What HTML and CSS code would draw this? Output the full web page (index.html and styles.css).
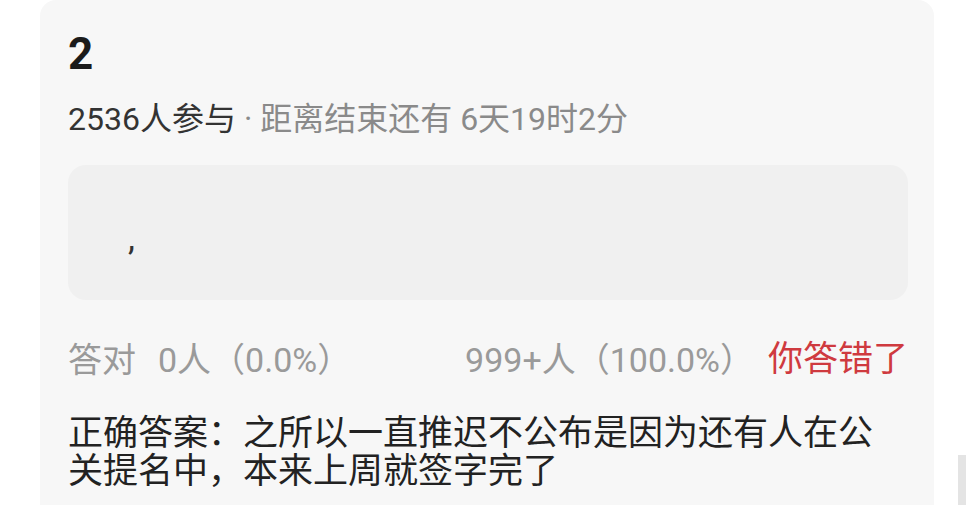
FILE: index.html
```html
<!DOCTYPE html>
<html lang="zh-CN">
<head>
<meta charset="utf-8">
<title>竞猜</title>
<link rel="stylesheet" href="styles.css">
</head>
<body>
<div class="page">
  <section class="quiz-card">
    <h2 class="quiz-title">2</h2>
    <p class="quiz-meta"><span class="meta-count">2536人参与</span><span class="meta-time"> · 距离结束还有 6天19时2分</span></p>
    <div class="option-box"><span class="option-text">,</span></div>
    <div class="stats-row">
      <div class="stat-left"><span class="stat-label">答对</span><span>0人（0.0%）</span></div>
      <div class="stat-right"><span>999+人（100.0%）</span><span class="result-wrong">你答错了</span></div>
    </div>
    <p class="answer">正确答案：之所以一直推迟不公布是因为还有人在公关提名中，本来上周就签字完了</p>
  </section>
  <div class="scroll-thumb"></div>
</div>
</body>
</html>
```

FILE: styles.css
```css
html, body {
  margin: 0;
  padding: 0;
  background: #ffffff;
}

body {
  font-family: Roboto, "Noto Sans CJK SC", sans-serif;
  width: 974px;
  height: 505px;
  overflow: hidden;
}

.page {
  position: relative;
  height: 505px;
  padding-left: 40px;
}

.quiz-card {
  width: 894px;
  height: 505px;
  box-sizing: border-box;
  background: #f7f7f7;
  border-radius: 16px 16px 0 0;
  padding: 28px 26px 0 28px;
}

.quiz-title {
  margin: 0;
  font-size: 44px;
  line-height: 52px;
  font-weight: 700;
  color: #1b1b1b;
}

.quiz-meta {
  margin: 19px 0 0;
  font-size: 32px;
  line-height: 40px;
  white-space: nowrap;
}

.meta-count {
  color: #333333;
}

.meta-time {
  color: #8a8a8a;
}

.option-box {
  margin-top: 26px;
  height: 135px;
  box-sizing: border-box;
  background: #f0f0f0;
  border-radius: 18px;
  padding: 54px 0 0 60px;
  font-size: 35px;
  line-height: 40px;
  color: #333333;
}

.stats-row {
  margin-top: 40px;
  display: flex;
  justify-content: space-between;
  font-size: 34px;
  line-height: 40px;
  color: #9a9a9a;
  white-space: nowrap;
}

.stat-left,
.stat-right {
  display: flex;
}

.stat-label {
  margin-right: 22px;
}

.stat-count {
  letter-spacing: 0.2px;
}

.result-wrong {
  margin-left: 14px;
  font-size: 35px;
  color: #cf3a3f;
}

.answer {
  margin: 35px 0 0;
  padding-right: 12px;
  font-size: 35px;
  line-height: 38px;
  color: #222222;
}

.scroll-thumb {
  position: absolute;
  left: 958px;
  top: 455px;
  width: 8px;
  height: 50px;
  background: #e4e4e4;
}
```
